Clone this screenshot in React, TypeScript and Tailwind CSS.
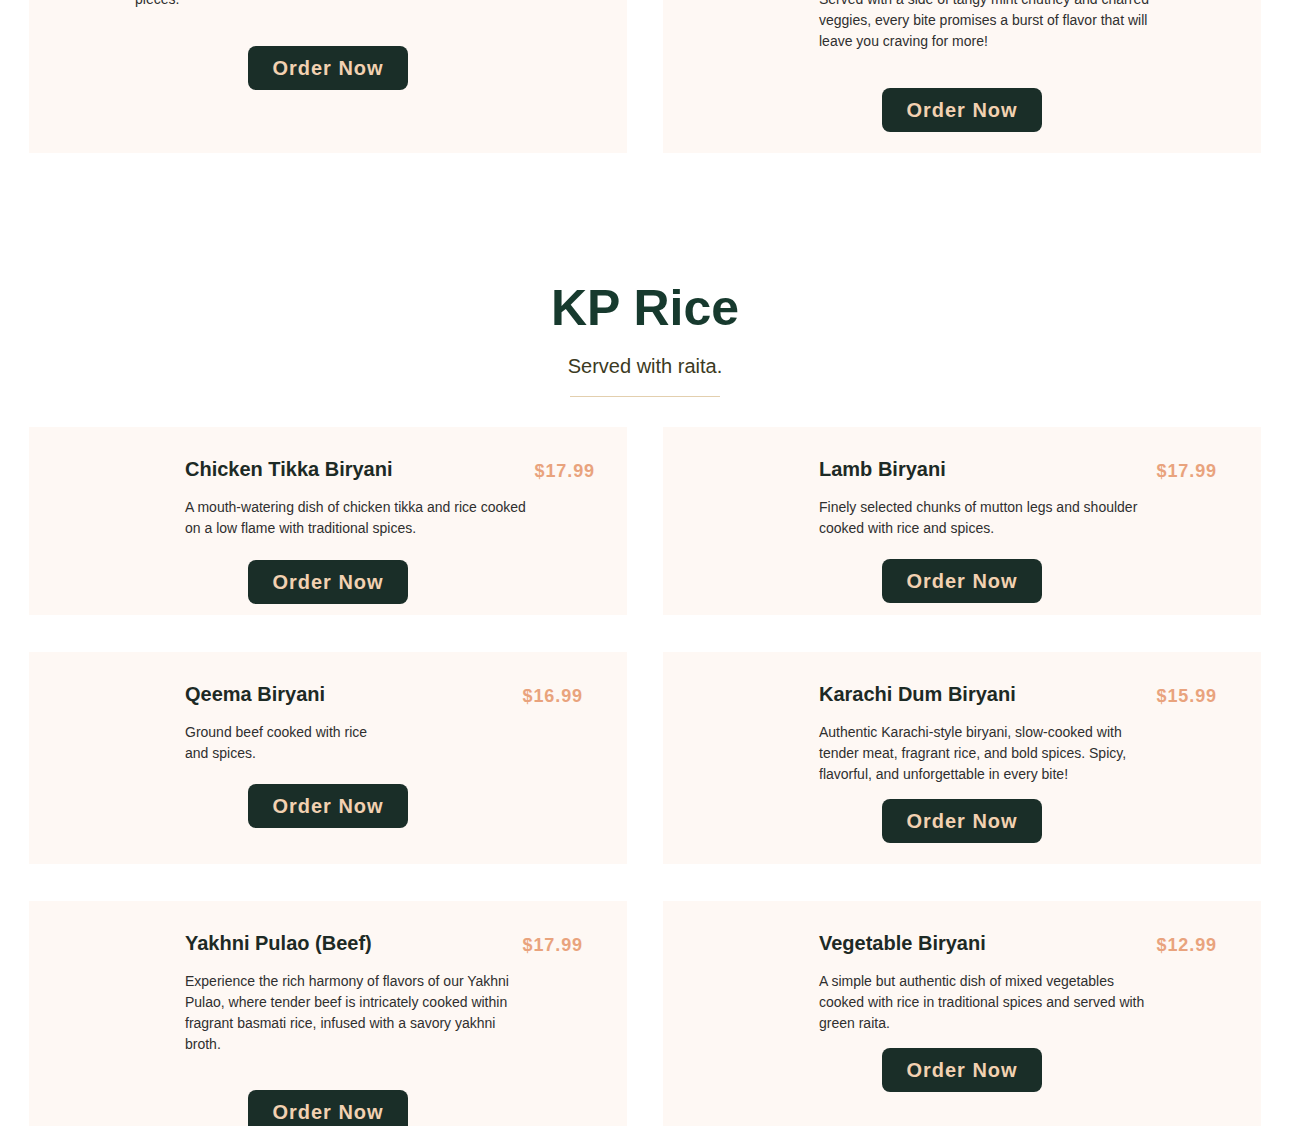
import React from 'react';

interface MenuItem {
  name: string;
  price: string;
  desc: string;
  descW: string;
  priceMr: string;
  btnMt: string;
}

const rows: { h: string; items: MenuItem[] }[] = [
  {
    h: 'h-[188px]',
    items: [
      {
        name: 'Chicken Tikka Biryani',
        price: '$17.99',
        desc: 'A mouth-watering dish of chicken tikka and rice cooked on a low flame with traditional spices.',
        descW: 'max-w-[352px]',
        priceMr: 'mr-[32px]',
        btnMt: 'mt-[21px]',
      },
      {
        name: 'Lamb Biryani',
        price: '$17.99',
        desc: 'Finely selected chunks of mutton legs and shoulder cooked with rice and spices.',
        descW: 'max-w-[332px]',
        priceMr: 'mr-[44px]',
        btnMt: 'mt-5',
      },
    ],
  },
  {
    h: 'h-[212px]',
    items: [
      {
        name: 'Qeema Biryani',
        price: '$16.99',
        desc: 'Ground beef cooked with rice and spices.',
        descW: 'max-w-[192px]',
        priceMr: 'mr-[44px]',
        btnMt: 'mt-5',
      },
      {
        name: 'Karachi Dum Biryani',
        price: '$15.99',
        desc: 'Authentic Karachi-style biryani, slow-cooked with tender meat, fragrant rice, and bold spices. Spicy, flavorful, and unforgettable in every bite!',
        descW: 'max-w-[332px]',
        priceMr: 'mr-[44px]',
        btnMt: 'mt-[14px]',
      },
    ],
  },
  {
    h: 'h-[260px]',
    items: [
      {
        name: 'Yakhni Pulao (Beef)',
        price: '$17.99',
        desc: 'Experience the rich harmony of flavors of our Yakhni Pulao, where tender beef is intricately cooked within fragrant basmati rice, infused with a savory yakhni broth.',
        descW: 'max-w-[340px]',
        priceMr: 'mr-[44px]',
        btnMt: 'mt-[35px]',
      },
      {
        name: 'Vegetable Biryani',
        price: '$12.99',
        desc: 'A simple but authentic dish of mixed vegetables cooked with rice in traditional spices and served with green raita.',
        descW: 'max-w-[332px]',
        priceMr: 'mr-[44px]',
        btnMt: 'mt-[14px]',
      },
    ],
  },
];

function OrderButton({ className = '' }: { className?: string }) {
  return (
    <button
      className={`self-center shrink-0 rounded-lg bg-[#1a2e28] px-6 py-2 text-xl leading-7 font-bold tracking-wider text-[#f2d1b1] ${className}`}
    >
      Order Now
    </button>
  );
}

function MenuCard({ item, h }: { item: MenuItem; h: string }) {
  return (
    <div className={`flex flex-col bg-[#fef8f4] pt-7 ${h}`}>
      <div className="flex items-start">
        {/* image slot */}
        <div className="w-[156px] shrink-0" />
        <div className="min-w-0 flex-1">
          <h3 className="text-xl leading-7 font-bold text-[#1d2a25]">{item.name}</h3>
          <p className={`mt-[14px] text-sm leading-[21px] text-[#2f2f2f] ${item.descW}`}>{item.desc}</p>
        </div>
        <span className={`mt-0.5 shrink-0 text-lg leading-7 font-bold tracking-wider text-[#e9a37d] ${item.priceMr}`}>
          {item.price}
        </span>
      </div>
      <OrderButton className={item.btnMt} />
    </div>
  );
}

export default function App() {
  return (
    <div className="min-h-screen bg-white pl-[29px] font-[family-name:Liberation_Sans,Arial,sans-serif]">
      <div className="w-[1232px]">
        {/* tail of the previous section */}
        <div className="grid h-[153px] grid-cols-2 gap-9">
          <div className="flex flex-col justify-end overflow-hidden bg-[#fef8f4] pb-[63px]">
            <p className="max-w-[440px] pl-[106px] text-sm leading-[21px] text-[#2f2f2f]">pieces.</p>
            <OrderButton className="mt-9" />
          </div>
          <div className="flex flex-col justify-end overflow-hidden bg-[#fef8f4] pb-[21px]">
            <p className="max-w-[486px] pl-[156px] text-sm leading-[21px] text-[#2f2f2f]">
              Served with a side of tangy mint chutney and charred veggies, every bite promises a burst of flavor
              that will leave you craving for more!
            </p>
            <OrderButton className="mt-9" />
          </div>
        </div>

        {/* KP Rice */}
        <h2 className="mt-[130px] text-center text-[50px] leading-none font-bold text-[#173a2e]">KP Rice</h2>
        <p className="mt-[19px] text-center text-xl leading-7 text-[#3b3a22]">Served with raita.</p>
        <div className="mx-auto mt-4 h-px w-[150px] bg-[#e3cfae]" />

        <div className="mt-[30px] flex flex-col gap-[37px]">
          {rows.map((row, i) => (
            <div key={i} className="grid grid-cols-2 gap-9">
              {row.items.map((item) => (
                <MenuCard key={item.name} item={item} h={row.h} />
              ))}
            </div>
          ))}
        </div>
      </div>
    </div>
  );
}
